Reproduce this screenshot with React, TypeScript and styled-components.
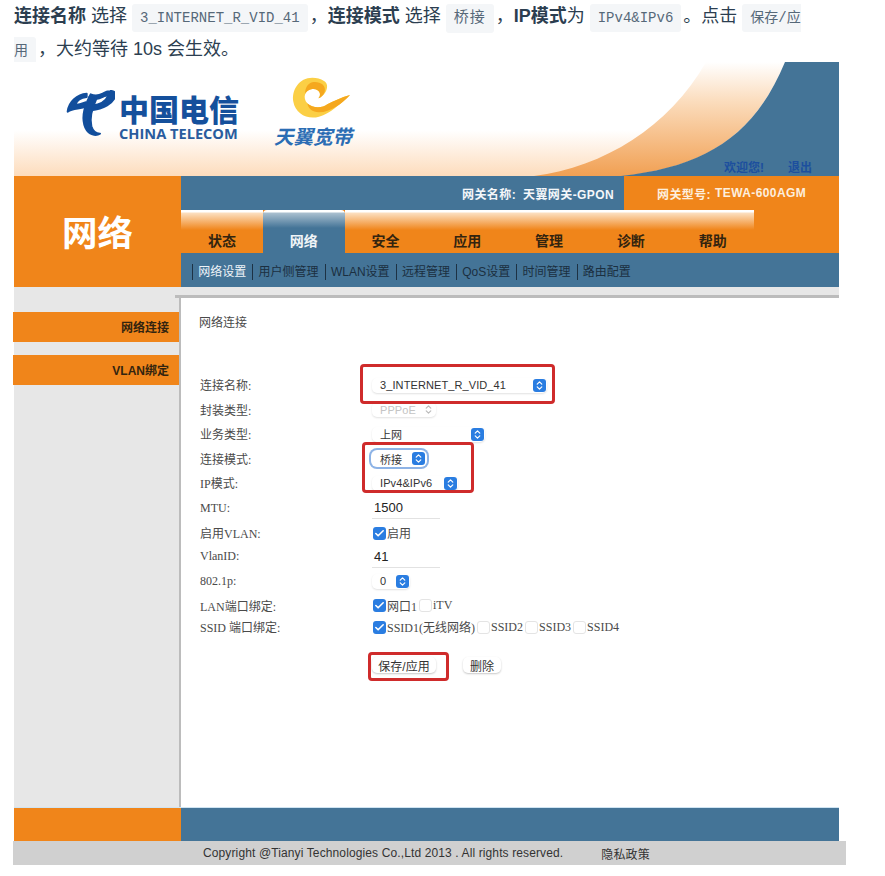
import { Check, ChevronsUpDown } from 'lucide-react';
import styled, { createGlobalStyle } from 'styled-components';

const sans = '"Liberation Sans", "Noto Sans CJK SC", sans-serif';
const serif = '"Liberation Serif", "Noto Sans CJK SC", serif';
const orange = '#f0851a';
const blue = '#447497';

const Global = createGlobalStyle`
  body {
    margin: 0;
    background: #fff;
    font-family: ${sans};
  }
`;

const Intro = styled.p`
  margin: 0;
  padding: 1px 0 0 14px;
  width: 800px;
  height: 61px;
  font-size: 18px;
  line-height: 31px;
  color: #2c3e50;
  b {
    font-weight: 700;
  }
`;

const Code = styled.code<{ $wide?: boolean }>`
  padding: 6px 8px;
  margin: 0 2px 0 5px;
  background: #f4f6f8;
  border-radius: 3px;
  color: #566878;
  font-family: "Liberation Mono", "Noto Sans CJK SC", monospace;
  font-size: ${(p) => (p.$wide ? '15px' : '14px')};
  letter-spacing: ${(p) => (p.$wide ? '1px' : '0')};
`;

const Shell = styled.div`
  width: 825px;
  margin-left: 14px;
`;

const Banner = styled.header`
  position: relative;
  height: 114px;
  display: flex;
  align-items: flex-start;
  background: linear-gradient(#fff 0, #fff 60%, #fddcbc 100%);
  overflow: hidden;
`;

const Swoosh = styled.svg`
  position: absolute;
  inset: 0;
`;

const TelecomLogo = styled.div`
  position: relative;
  display: flex;
  gap: 4px;
  margin: 28px 0 0 51px;
`;

const TelecomWords = styled.div`
  display: flex;
  flex-direction: column;
  align-items: flex-start;
`;

const TelecomCn = styled.div`
  font-family: "Noto Sans CJK SC", sans-serif;
  font-weight: 900;
  font-size: 30px;
  line-height: 36px;
  color: #15509c;
`;

const TelecomEn = styled.div`
  font-family: "Open Sans", sans-serif;
  font-weight: 700;
  font-size: 14.6px;
  line-height: 14px;
  color: #2a5c9e;
  white-space: nowrap;
`;

const BroadbandLogo = styled.div`
  position: relative;
  display: flex;
  flex-direction: column;
  align-items: flex-start;
  margin: 13px 0 0 35px;
  svg {
    margin-left: 10px;
  }
`;

const BroadbandName = styled.div`
  margin-top: -4px;
  font-family: "Noto Sans CJK SC", sans-serif;
  font-weight: 700;
  font-style: italic;
  font-size: 19.5px;
  line-height: 20px;
  color: #2b6db4;
  white-space: nowrap;
`;

const Welcome = styled.div`
  position: absolute;
  right: 27px;
  bottom: 1px;
  display: flex;
  gap: 24px;
  font-size: 12px;
  line-height: 14px;
  font-weight: 700;
  color: #1c4f9e;
`;

const Masthead = styled.div`
  display: grid;
  grid-template-columns: 167px 1fr;
  height: 111px;
`;

const SectionTitle = styled.div`
  display: flex;
  align-items: center;
  justify-content: center;
  padding-bottom: 2px;
  background: ${orange};
  color: #fff;
  font-size: 35.5px;
  font-weight: 700;
  font-family: "Noto Sans CJK SC", sans-serif;
`;

const NavColumn = styled.div`
  display: flex;
  flex-direction: column;
`;

const GatewayBar = styled.div`
  height: 34px;
  display: flex;
  justify-content: flex-end;
  background: ${blue};
  font-size: 12px;
  font-weight: 700;
  letter-spacing: 0.4px;
  color: #f4f7fa;
`;

const GatewayName = styled.div`
  display: flex;
  align-items: center;
  gap: 7px;
  margin-right: 10px;
`;

const GatewayModel = styled.div`
  width: 215px;
  display: flex;
  align-items: center;
  gap: 4px;
  padding-left: 33px;
  box-sizing: border-box;
  background: ${orange};
  color: #fdeedd;
`;

const TabRow = styled.nav`
  height: 43px;
  display: flex;
  background: ${orange};
`;

const Tab = styled.div<{ $active?: boolean }>`
  width: 81.8px;
  display: flex;
  align-items: flex-end;
  justify-content: center;
  padding-bottom: 3px;
  box-sizing: border-box;
  font-size: 14px;
  line-height: 20px;
  font-weight: 700;
  font-family: "Noto Sans CJK SC", sans-serif;
  color: ${(p) => (p.$active ? '#f0f4f7' : '#33240f')};
  border-radius: ${(p) => (p.$active ? '4px 4px 0 0' : '0')};
  background: ${(p) =>
    p.$active
      ? `linear-gradient(#fff 0, #fff 2px, #a9bfcf 3px, ${blue} 18px)`
      : `linear-gradient(#fff 0, #fff 2px, #fcdfc0 3px, ${orange} 20px)`};
`;

const SubNav = styled.div`
  height: 34px;
  display: flex;
  align-items: center;
  padding: 3px 0 0 11px;
  box-sizing: border-box;
  background: ${blue};
  font-size: 12px;
`;

const SubLink = styled.span<{ $active?: boolean }>`
  height: 16px;
  line-height: 16px;
  padding: 0 6px 0 5.3px;
  border-left: 1px solid #1d3244;
  color: ${(p) => (p.$active ? '#eef3f7' : '#1b2f40')};
  white-space: nowrap;
`;

const Body = styled.div`
  display: grid;
  grid-template-columns: 165px 1fr;
  height: 520px;
  background: #e7e7e7;
`;

const Sidebar = styled.aside`
  display: flex;
  flex-direction: column;
  gap: 13px;
  margin-left: -1px;
  padding-top: 25px;
`;

const SideItem = styled.div`
  width: 167px;
  height: 30px;
  display: flex;
  align-items: center;
  justify-content: flex-end;
  padding: 0 11px 2px 0;
  box-sizing: border-box;
  background: ${orange};
  color: #33240f;
  font-size: 12px;
  font-weight: 700;
`;

const Panel = styled.main`
  position: relative;
  margin-top: 8px;
  padding: 17px 0 0 18px;
  background: #fff;
  border-top: 3px solid #bcbcbc;
  border-left: 2px solid #bcbcbc;
  font-family: ${serif};
  font-size: 12px;
  color: #4a4a4a;
  &::before {
    content: '';
    position: absolute;
    left: -6px;
    top: -3px;
    width: 6px;
    height: 3px;
    background: #bcbcbc;
  }
`;

const PanelTitle = styled.div`
  height: 58px;
  line-height: 16px;
`;

const Row = styled.div<{ $h: number }>`
  display: grid;
  grid-template-columns: 172px 1fr;
  align-items: center;
  height: ${(p) => p.$h}px;
  padding-left: 1px;
`;

const Controls = styled.div`
  display: flex;
  align-items: center;
`;

const SelectBox = styled.div<{ $w: number; $focus?: boolean; $off?: boolean }>`
  width: ${(p) => p.$w}px;
  height: 15px;
  display: flex;
  align-items: center;
  justify-content: space-between;
  padding: 0 1px 0 8px;
  box-sizing: border-box;
  border-radius: 5px;
  background: #fff;
  font-family: ${sans};
  font-size: 11px;
  color: ${(p) => (p.$off ? '#c4c4c4' : '#333')};
  letter-spacing: 0.1px;
  white-space: nowrap;
  box-shadow: ${(p) =>
    p.$focus ? '0 0 0 1px #fff, 0 0 0 3px #8db3e6' : '0 1px 2px rgba(0, 0, 0, 0.12)'};
`;

const Chip = styled.span<{ $off?: boolean }>`
  width: 13px;
  height: 13px;
  display: flex;
  align-items: center;
  justify-content: center;
  border-radius: 3px;
  background: ${(p) => (p.$off ? 'transparent' : '#2a7de1')};
  color: ${(p) => (p.$off ? '#bbb' : '#fff')};
`;

const TextBox = styled.div`
  width: 68px;
  height: 22px;
  display: flex;
  align-items: center;
  padding-left: 2px;
  box-sizing: border-box;
  border-bottom: 1px solid #e2e2e2;
  font-family: ${sans};
  font-size: 13px;
  color: #222;
`;

const Tick = styled.span<{ $on?: boolean }>`
  width: 13px;
  height: 13px;
  flex: none;
  display: flex;
  align-items: center;
  justify-content: center;
  margin-left: 1px;
  box-sizing: border-box;
  border-radius: 3px;
  background: ${(p) => (p.$on ? '#2a7de1' : '#fff')};
  border: ${(p) => (p.$on ? 'none' : '1px solid #e4e4e4')};
  color: #fff;
`;

const TickText = styled.span`
  margin: 0 1px 0 1px;
  white-space: nowrap;
`;

const Actions = styled.div`
  display: flex;
  gap: 27px;
  margin: 20px 0 0 173px;
`;

const Action = styled.div<{ $w: number }>`
  width: ${(p) => p.$w}px;
  height: 16px;
  display: flex;
  align-items: center;
  justify-content: center;
  border-radius: 5px;
  background: #fff;
  box-shadow: 0 1px 2px rgba(0, 0, 0, 0.22);
  font-family: ${sans};
  font-size: 12px;
  color: #333;
`;

const Frame = styled.div<{ $x: number; $y: number; $w: number; $h: number }>`
  position: absolute;
  left: ${(p) => p.$x}px;
  top: ${(p) => p.$y}px;
  width: ${(p) => p.$w}px;
  height: ${(p) => p.$h}px;
  box-sizing: border-box;
  border: 3px solid #cf2b2b;
  border-radius: 4px;
`;

const FootBar = styled.div`
  display: grid;
  grid-template-columns: 167px 1fr;
  height: 34px;
  border-top: 1px solid #cfe4f2;
  box-sizing: border-box;
`;

const FootLeft = styled.div`
  background: ${orange};
`;

const FootRight = styled.div`
  background: ${blue};
`;

const Copyright = styled.footer`
  width: 833px;
  height: 24px;
  margin-left: -1px;
  display: flex;
  align-items: center;
  gap: 38px;
  padding-left: 190px;
  box-sizing: border-box;
  background: #d0d0d0;
  color: #333;
  font-size: 12px;
  letter-spacing: 0.12px;
`;

const Select = ({ w, label, focus, off }: { w: number; label: string; focus?: boolean; off?: boolean }) => (
  <SelectBox $w={w} $focus={focus} $off={off}>
    {label}
    <Chip $off={off}>
      <ChevronsUpDown size={11} strokeWidth={2.6} />
    </Chip>
  </SelectBox>
);

const Box = ({ on, label }: { on?: boolean; label: string }) => (
  <>
    <Tick $on={on}>{on && <Check size={11} strokeWidth={3.5} />}</Tick>
    <TickText>{label}</TickText>
  </>
);

const tabs = ['状态', '网络', '安全', '应用', '管理', '诊断', '帮助'];
const links = ['网络设置', '用户侧管理', 'WLAN设置', '远程管理', 'QoS设置', '时间管理', '路由配置'];

const App = () => {
  return (
    <>
      <Global />
      <Intro>
        <b>连接名称</b> 选择<Code>3_INTERNET_R_VID_41</Code>，<b>连接模式</b> 选择<Code $wide>桥接</Code>，<b>IP模式</b>为
        <Code>IPv4&amp;IPv6</Code>。点击<Code>保存/应用</Code>，大约等待 10s 会生效。
      </Intro>
      <Shell>
        <Banner>
          <Swoosh width='825' height='114' viewBox='0 0 825 114'>
            <defs>
              <linearGradient id='peach' x1='0' y1='0' x2='0' y2='1'>
                <stop offset='0' stopColor='#fff' />
                <stop offset='0.35' stopColor='#fbdcbc' />
                <stop offset='1' stopColor='#f1a053' />
              </linearGradient>
            </defs>
            <path d='M692 0C655 65 590 105 520 114H610C690 105 740 75 771 0Z' fill='url(#peach)' />
            <path d='M771 0C740 75 690 105 607 114H825V0Z' fill={blue} />
          </Swoosh>
          <TelecomLogo>
            <svg width='50' height='50' viewBox='15 15 150 150'>
              <g fill='#124e9c' stroke='#124e9c' strokeWidth='6' strokeLinejoin='round'>
                <path d='M80 26C52 28 26 50 23 80C38 70 56 72 74 66L76 52C62 57 52 59 45 60C50 46 62 38 80 36Z' />
                <path d='M150 18C162 17 168 23 166 33C160 55 130 72 94 76L96 62C118 58 138 48 142 36C143 31 136 31 128 36C116 43 102 44 88 36L92 28C106 34 116 32 128 26C136 21 143 18 150 18Z' />
                <path d='M88 36C76 60 62 95 76 128C86 150 108 154 120 146C108 146 98 138 94 124C88 100 96 70 108 44Z' />
              </g>
            </svg>
            <TelecomWords>
              <TelecomCn>中国电信</TelecomCn>
              <TelecomEn>CHINA TELECOM</TelecomEn>
            </TelecomWords>
          </TelecomLogo>
          <BroadbandLogo>
            <svg width='75' height='55' viewBox='0 0 225 165'>
              <path
                d='M85 8C45 8 22 45 28 80C34 115 70 135 105 125C140 115 165 90 198 60C170 68 150 78 130 88C115 100 85 100 70 85C55 68 62 45 85 42C105 40 115 58 103 70C125 62 140 30 120 18C110 10 98 8 85 8Z'
                fill='#fbcf45'
              />
              <path
                d='M70 85C85 100 115 100 130 88C150 78 170 68 198 60C175 85 140 112 105 112C85 112 72 100 70 85Z'
                fill='#f5a81e'
              />
              <path d='M85 22C105 18 128 30 122 50C118 62 110 68 103 70C115 58 105 40 85 42C76 43 68 48 64 56C62 40 72 25 85 22Z' fill='#f5a81e' />
            </svg>
            <BroadbandName>天翼宽带</BroadbandName>
          </BroadbandLogo>
          <Welcome>
            <span>欢迎您!</span>
            <span>退出</span>
          </Welcome>
        </Banner>
        <Masthead>
          <SectionTitle>网络</SectionTitle>
          <NavColumn>
            <GatewayBar>
              <GatewayName>
                <span>网关名称:</span>
                <span>天翼网关-GPON</span>
              </GatewayName>
              <GatewayModel>
                <span>网关型号:</span>
                <span>TEWA-600AGM</span>
              </GatewayModel>
            </GatewayBar>
            <TabRow>
              {tabs.map((t) => (
                <Tab key={t} $active={t === '网络'}>
                  {t}
                </Tab>
              ))}
            </TabRow>
            <SubNav>
              {links.map((l, i) => (
                <SubLink key={l} $active={i === 0}>
                  {l}
                </SubLink>
              ))}
            </SubNav>
          </NavColumn>
        </Masthead>
        <Body>
          <Sidebar>
            <SideItem>网络连接</SideItem>
            <SideItem>VLAN绑定</SideItem>
          </Sidebar>
          <Panel>
            <PanelTitle>网络连接</PanelTitle>
            <Row $h={24}>
              连接名称:
              <Controls>
                <Select w={175} label='3_INTERNET_R_VID_41' />
              </Controls>
            </Row>
            <Row $h={25}>
              封装类型:
              <Controls>
                <Select w={64} label='PPPoE' off />
              </Controls>
            </Row>
            <Row $h={24}>
              业务类型:
              <Controls>
                <Select w={113} label='上网' />
              </Controls>
            </Row>
            <Row $h={25}>
              连接模式:
              <Controls>
                <Select w={54} label='桥接' focus />
              </Controls>
            </Row>
            <Row $h={24}>
              IP模式:
              <Controls>
                <Select w={86} label='IPv4&IPv6' />
              </Controls>
            </Row>
            <Row $h={26}>
              MTU:
              <Controls>
                <TextBox>1500</TextBox>
              </Controls>
            </Row>
            <Row $h={24}>
              启用VLAN:
              <Controls>
                <Box on label='启用' />
              </Controls>
            </Row>
            <Row $h={23}>
              VlanID:
              <Controls>
                <TextBox>41</TextBox>
              </Controls>
            </Row>
            <Row $h={26}>
              802.1p:
              <Controls>
                <Select w={38} label='0' />
              </Controls>
            </Row>
            <Row $h={23}>
              LAN端口绑定:
              <Controls>
                <Box on label='网口1' />
                <Box label='iTV' />
              </Controls>
            </Row>
            <Row $h={20}>
              SSID 端口绑定:
              <Controls>
                <Box on label='SSID1(无线网络)' />
                <Box label='SSID2' />
                <Box label='SSID3' />
                <Box label='SSID4' />
              </Controls>
            </Row>
            <Actions>
              <Action $w={64}>保存/应用</Action>
              <Action $w={38}>删除</Action>
            </Actions>
            <Frame $x={179} $y={66} $w={195} $h={40} />
            <Frame $x={181} $y={144} $w={112} $h={51} />
            <Frame $x={187} $y={354} $w={81} $h={29} />
          </Panel>
        </Body>
        <FootBar>
          <FootLeft />
          <FootRight />
        </FootBar>
        <Copyright>
          <span>Copyright @Tianyi Technologies Co.,Ltd 2013 . All rights reserved.</span>
          <span>隐私政策</span>
        </Copyright>
      </Shell>
    </>
  );
};

export default App;
